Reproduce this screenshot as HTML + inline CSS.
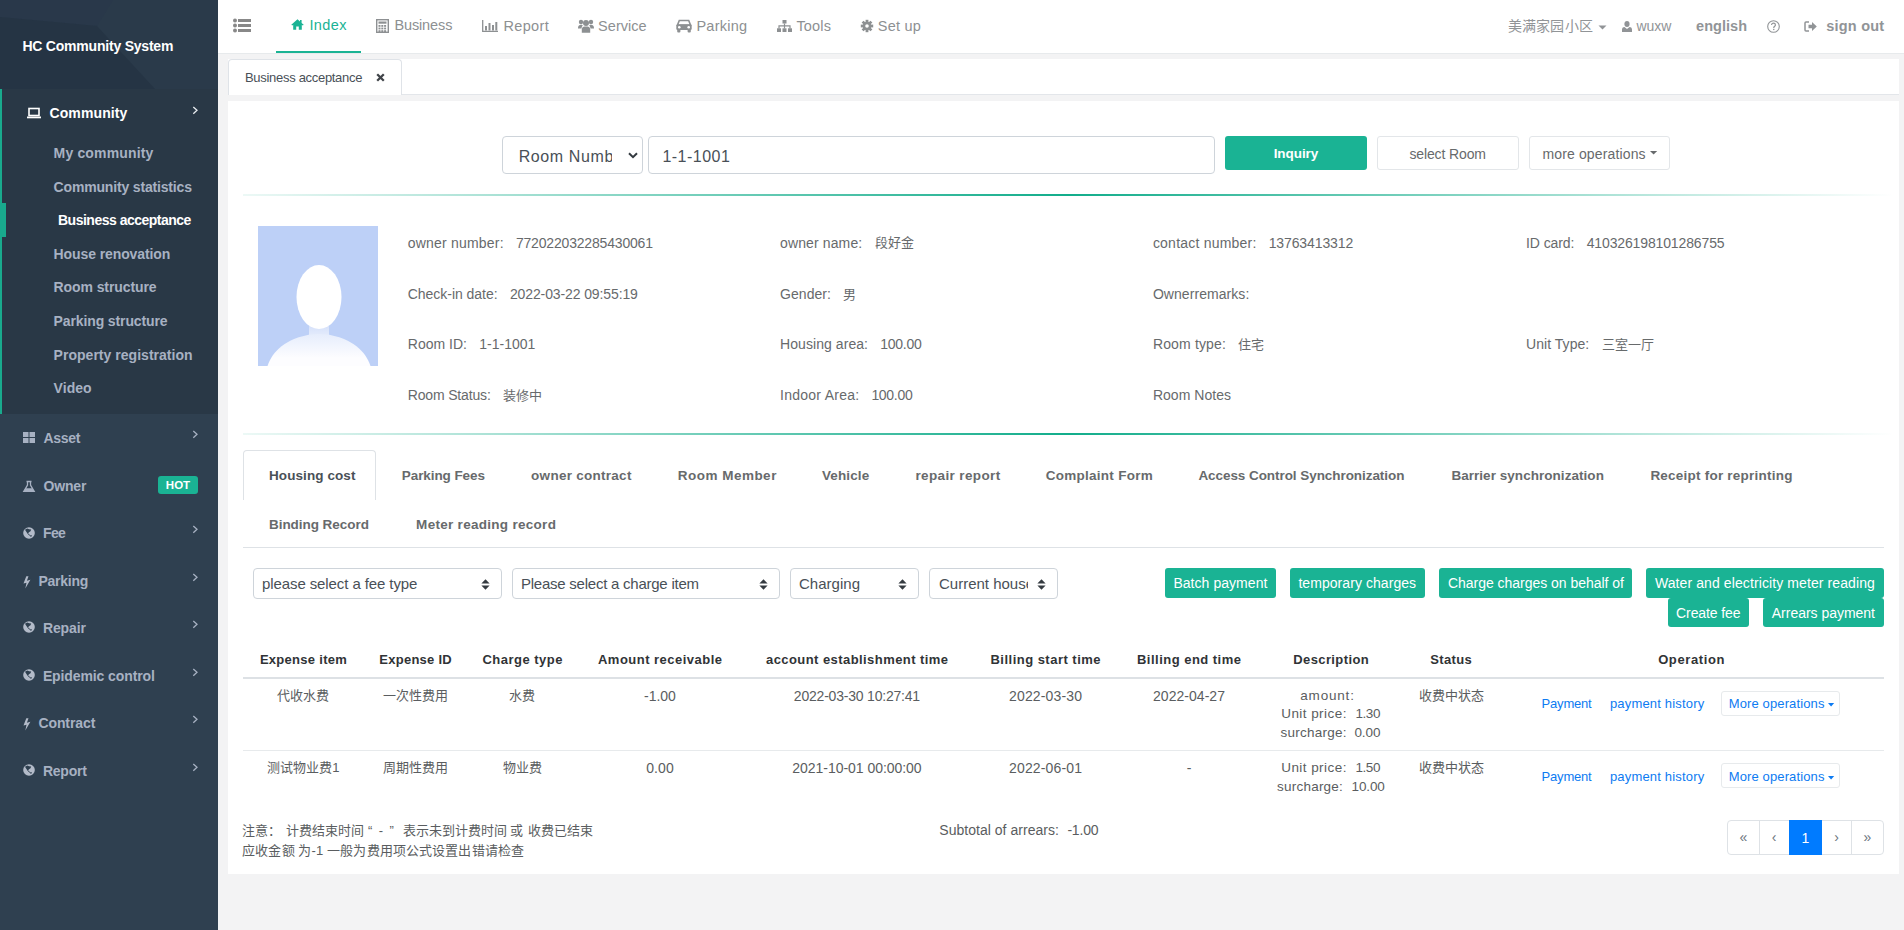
<!DOCTYPE html>
<html lang="zh-CN"><head><meta charset="utf-8"><title>HC Community System</title>
<style>
*{box-sizing:border-box}
html,body{margin:0;padding:0}
body{width:1904px;height:930px;overflow:hidden;background:#f3f3f4;font-family:"Liberation Sans",sans-serif;color:#676a6c;position:relative}
.t{position:absolute;white-space:nowrap}
svg{position:absolute;overflow:visible}
</style></head><body>
<div style="position:absolute;left:0px;top:0px;width:218px;height:930px;background:#2f4050"></div><svg style="left:0;top:0" width="218" height="89" viewBox="0 0 218 89"><rect width="218" height="89" fill="#2a3a4a"/><path d="M0 0 H113 L97 26 L0 17 Z" fill="#29384a"/><path d="M0 17 L97 26 L155 89 H0 Z" fill="#253444"/></svg><div class="t" style="left:22.40px;top:39.15px;font-size:14px;line-height:14px;color:#ffffff;font-weight:700;letter-spacing:-0.212px">HC Community System</div><div style="position:absolute;left:0px;top:89px;width:218px;height:325px;background:#293846"></div><div style="position:absolute;left:0px;top:89px;width:2px;height:325px;background:#19aa8d"></div><div style="position:absolute;left:0px;top:203px;width:6px;height:34px;background:#19aa8d"></div><svg style="left:27px;top:107px" width="14" height="12" viewBox="0 0 14 12"><rect x="2" y="1.5" width="10" height="7" fill="none" stroke="#fff" stroke-width="1.6"/><rect x="0" y="9.5" width="14" height="1.8" fill="#fff"/></svg><div class="t" style="left:49.40px;top:105.75px;font-size:14px;line-height:14px;color:#ffffff;font-weight:700;letter-spacing:0.125px">Community</div><svg style="left:192px;top:106px" width="7" height="9" viewBox="0 0 7 9"><path d="M1.3 0.9 L5 4.3 L1.3 7.7" fill="none" stroke="#e8ecf0" stroke-width="1.3"/></svg><div class="t" style="left:53.60px;top:146.25px;font-size:14px;line-height:14px;color:#a7b1c2;font-weight:700;letter-spacing:0.153px">My community</div><div class="t" style="left:53.60px;top:179.85px;font-size:14px;line-height:14px;color:#a7b1c2;font-weight:700;letter-spacing:-0.168px">Community statistics</div><div class="t" style="left:58.00px;top:213.05px;font-size:14px;line-height:14px;color:#ffffff;font-weight:700;letter-spacing:-0.500px">Business acceptance</div><div class="t" style="left:53.60px;top:246.85px;font-size:14px;line-height:14px;color:#a7b1c2;font-weight:700;letter-spacing:-0.103px">House renovation</div><div class="t" style="left:53.60px;top:280.45px;font-size:14px;line-height:14px;color:#a7b1c2;font-weight:700;letter-spacing:-0.095px">Room structure</div><div class="t" style="left:53.60px;top:314.05px;font-size:14px;line-height:14px;color:#a7b1c2;font-weight:700;letter-spacing:-0.121px">Parking structure</div><div class="t" style="left:53.60px;top:347.65px;font-size:14px;line-height:14px;color:#a7b1c2;font-weight:700;letter-spacing:0.026px">Property registration</div><div class="t" style="left:53.60px;top:381.25px;font-size:14px;line-height:14px;color:#a7b1c2;font-weight:700;letter-spacing:0.031px">Video</div><div class="t" style="left:43.40px;top:431.35px;font-size:14px;line-height:14px;color:#a7b1c2;font-weight:700;letter-spacing:-0.285px">Asset</div><svg style="left:23px;top:432.2px" width="12" height="11" viewBox="0 0 12 11"><rect x="0" y="0" width="5.5" height="5" fill="#a7b1c2"/><rect x="6.5" y="0" width="5.5" height="5" fill="#a7b1c2"/><rect x="0" y="6" width="5.5" height="5" fill="#a7b1c2"/><rect x="6.5" y="6" width="5.5" height="5" fill="#a7b1c2"/></svg><svg style="left:192px;top:430.2px" width="7" height="9" viewBox="0 0 7 9"><path d="M1.3 0.9 L5 4.3 L1.3 7.7" fill="none" stroke="#a7b1c2" stroke-width="1.3"/></svg><div class="t" style="left:43.40px;top:479.35px;font-size:14px;line-height:14px;color:#a7b1c2;font-weight:700;letter-spacing:-0.145px">Owner</div><svg style="left:23px;top:481.2px" width="12" height="11" viewBox="0 0 12 11"><path d="M3.5 0.5 H8.5 M4.5 0.5 V4 L0.8 10.3 H11.2 L7.5 4 V0.5" fill="none" stroke="#a7b1c2" stroke-width="1.3"/><path d="M2.6 7.3 H9.4 L11 10.3 H1 Z" fill="#a7b1c2"/></svg><div style="position:absolute;left:158px;top:476px;width:40px;height:18px;background:#1ab394;border-radius:3px"></div><div class="t" style="left:165.86px;top:480.27px;font-size:11.5px;line-height:11.5px;color:#ffffff;font-weight:700">HOT</div><div class="t" style="left:42.90px;top:526.35px;font-size:14px;line-height:14px;color:#a7b1c2;font-weight:700;letter-spacing:-0.562px">Fee</div><svg style="left:23px;top:526.6px" width="12" height="12" viewBox="0 0 12 12"><circle cx="6" cy="6" r="5.8" fill="#b3bbc9"/><path d="M2 2.7 L4.2 1.5 L6.2 2.2 L8.2 2.5 L7.5 4.3 L5.9 5.3 L4.9 6.9 L3.6 5.2 Z" fill="#2f4050"/><path d="M4.8 6.7 L7.4 8.8" stroke="#2f4050" stroke-width="0.9"/><path d="M7.2 8.3 L9 8.2 L8.3 9.8 L7.3 9.6 Z" fill="#2f4050"/></svg><svg style="left:192px;top:525.2px" width="7" height="9" viewBox="0 0 7 9"><path d="M1.3 0.9 L5 4.3 L1.3 7.7" fill="none" stroke="#a7b1c2" stroke-width="1.3"/></svg><div class="t" style="left:38.40px;top:574.15px;font-size:14px;line-height:14px;color:#a7b1c2;font-weight:700;letter-spacing:-0.227px">Parking</div><svg style="left:22.6px;top:575.5px" width="8" height="13" viewBox="0 0 8 13"><path d="M3.3 0.3 H5.5 L3.9 4.7 L7.4 3.8 L2.3 12.6 L3.5 6.7 L0.5 7.5 Z" fill="#b3bbc9"/></svg><svg style="left:192px;top:573px" width="7" height="9" viewBox="0 0 7 9"><path d="M1.3 0.9 L5 4.3 L1.3 7.7" fill="none" stroke="#a7b1c2" stroke-width="1.3"/></svg><div class="t" style="left:42.90px;top:621.15px;font-size:14px;line-height:14px;color:#a7b1c2;font-weight:700;letter-spacing:-0.116px">Repair</div><svg style="left:23px;top:621.4px" width="12" height="12" viewBox="0 0 12 12"><circle cx="6" cy="6" r="5.8" fill="#b3bbc9"/><path d="M2 2.7 L4.2 1.5 L6.2 2.2 L8.2 2.5 L7.5 4.3 L5.9 5.3 L4.9 6.9 L3.6 5.2 Z" fill="#2f4050"/><path d="M4.8 6.7 L7.4 8.8" stroke="#2f4050" stroke-width="0.9"/><path d="M7.2 8.3 L9 8.2 L8.3 9.8 L7.3 9.6 Z" fill="#2f4050"/></svg><svg style="left:192px;top:620px" width="7" height="9" viewBox="0 0 7 9"><path d="M1.3 0.9 L5 4.3 L1.3 7.7" fill="none" stroke="#a7b1c2" stroke-width="1.3"/></svg><div class="t" style="left:42.90px;top:668.75px;font-size:14px;line-height:14px;color:#a7b1c2;font-weight:700;letter-spacing:-0.105px">Epidemic control</div><svg style="left:23px;top:669.0px" width="12" height="12" viewBox="0 0 12 12"><circle cx="6" cy="6" r="5.8" fill="#b3bbc9"/><path d="M2 2.7 L4.2 1.5 L6.2 2.2 L8.2 2.5 L7.5 4.3 L5.9 5.3 L4.9 6.9 L3.6 5.2 Z" fill="#2f4050"/><path d="M4.8 6.7 L7.4 8.8" stroke="#2f4050" stroke-width="0.9"/><path d="M7.2 8.3 L9 8.2 L8.3 9.8 L7.3 9.6 Z" fill="#2f4050"/></svg><svg style="left:192px;top:667.6px" width="7" height="9" viewBox="0 0 7 9"><path d="M1.3 0.9 L5 4.3 L1.3 7.7" fill="none" stroke="#a7b1c2" stroke-width="1.3"/></svg><div class="t" style="left:38.40px;top:716.15px;font-size:14px;line-height:14px;color:#a7b1c2;font-weight:700;letter-spacing:-0.080px">Contract</div><svg style="left:22.6px;top:717.5px" width="8" height="13" viewBox="0 0 8 13"><path d="M3.3 0.3 H5.5 L3.9 4.7 L7.4 3.8 L2.3 12.6 L3.5 6.7 L0.5 7.5 Z" fill="#b3bbc9"/></svg><svg style="left:192px;top:715px" width="7" height="9" viewBox="0 0 7 9"><path d="M1.3 0.9 L5 4.3 L1.3 7.7" fill="none" stroke="#a7b1c2" stroke-width="1.3"/></svg><div class="t" style="left:42.90px;top:764.15px;font-size:14px;line-height:14px;color:#a7b1c2;font-weight:700;letter-spacing:-0.225px">Report</div><svg style="left:23px;top:764.4px" width="12" height="12" viewBox="0 0 12 12"><circle cx="6" cy="6" r="5.8" fill="#b3bbc9"/><path d="M2 2.7 L4.2 1.5 L6.2 2.2 L8.2 2.5 L7.5 4.3 L5.9 5.3 L4.9 6.9 L3.6 5.2 Z" fill="#2f4050"/><path d="M4.8 6.7 L7.4 8.8" stroke="#2f4050" stroke-width="0.9"/><path d="M7.2 8.3 L9 8.2 L8.3 9.8 L7.3 9.6 Z" fill="#2f4050"/></svg><svg style="left:192px;top:763px" width="7" height="9" viewBox="0 0 7 9"><path d="M1.3 0.9 L5 4.3 L1.3 7.7" fill="none" stroke="#a7b1c2" stroke-width="1.3"/></svg><div style="position:absolute;left:218px;top:0px;width:1686px;height:53px;background:#ffffff"></div><div style="position:absolute;left:218px;top:53px;width:1686px;height:1px;background:#e7eaec"></div><svg style="left:232px;top:18px" width="20" height="15" viewBox="0 0 20 15"><circle cx="3" cy="2.5" r="2" fill="#888"/><circle cx="3" cy="7.5" r="2" fill="#888"/><circle cx="3" cy="12.5" r="2" fill="#888"/><rect x="6" y="1" width="13" height="3" fill="#888"/><rect x="6" y="6" width="13" height="3" fill="#888"/><rect x="6" y="11" width="13" height="3" fill="#888"/></svg><div style="position:absolute;left:276px;top:51px;width:85px;height:2px;background:#1ab394"></div><svg style="left:291px;top:19px" width="13" height="11" viewBox="0 0 13 11"><path d="M6.5 0.3 L0.3 5.8 L1.2 6.6 L2.2 5.8 V10.8 H5.2 V7.6 H7.8 V10.8 H10.8 V5.8 L11.8 6.6 L12.7 5.8 L10.6 3.9 V1 H9 V2.5 Z" fill="#1ab394"/></svg><div class="t" style="left:309.40px;top:17.53px;font-size:14.5px;line-height:14.5px;color:#1ab394;letter-spacing:0.379px">Index</div><svg style="left:376px;top:19px" width="13" height="14" viewBox="0 0 13 14"><rect x="0.7" y="0.7" width="11.6" height="12.6" fill="none" stroke="#8d9092" stroke-width="1.4"/><rect x="2.5" y="2.5" width="8" height="2.2" fill="#8d9092"/><rect x="2.5" y="6.0" width="2" height="1.8" fill="#8d9092"/><rect x="2.5" y="8.6" width="2" height="1.8" fill="#8d9092"/><rect x="2.5" y="11.2" width="2" height="1.8" fill="#8d9092"/><rect x="5.3" y="6.0" width="2" height="1.8" fill="#8d9092"/><rect x="5.3" y="8.6" width="2" height="1.8" fill="#8d9092"/><rect x="5.3" y="11.2" width="2" height="1.8" fill="#8d9092"/><rect x="8.1" y="6.0" width="2" height="1.8" fill="#8d9092"/><rect x="8.1" y="8.6" width="2" height="1.8" fill="#8d9092"/><rect x="8.1" y="11.2" width="2" height="1.8" fill="#8d9092"/></svg><div class="t" style="left:394.40px;top:18.33px;font-size:14.5px;line-height:14.5px;color:#8d9092;letter-spacing:-0.121px">Business</div><svg style="left:482px;top:20px" width="16" height="12" viewBox="0 0 16 12"><path d="M0.7 0 V11.3 H16" fill="none" stroke="#8d9092" stroke-width="1.3"/><rect x="3" y="6" width="2" height="4.5" fill="#8d9092"/><rect x="6.5" y="3" width="2" height="7.5" fill="#8d9092"/><rect x="10" y="5" width="2" height="5.5" fill="#8d9092"/><rect x="13.3" y="2" width="2" height="8.5" fill="#8d9092"/></svg><div class="t" style="left:503.40px;top:18.53px;font-size:14.5px;line-height:14.5px;color:#8d9092;letter-spacing:0.374px">Report</div><svg style="left:578px;top:19px" width="16" height="14" viewBox="0 0 16 14"><circle cx="3" cy="3" r="2.2" fill="#8d9092"/><circle cx="13" cy="3" r="2.2" fill="#8d9092"/><circle cx="8" cy="4" r="3" fill="#8d9092"/><path d="M0 9 C0 6.5 1.5 5.8 3 5.8 C4 5.8 4.5 6.2 4.8 6.6 C3.8 7.5 3.6 8.4 3.6 9.6 H0 Z" fill="#8d9092"/><path d="M16 9 C16 6.5 14.5 5.8 13 5.8 C12 5.8 11.5 6.2 11.2 6.6 C12.2 7.5 12.4 8.4 12.4 9.6 H16 Z" fill="#8d9092"/><path d="M3.8 13.8 V10.5 C3.8 8.5 5.2 7.4 6.5 7.4 H9.5 C10.8 7.4 12.2 8.5 12.2 10.5 V13.8 Z" fill="#8d9092"/></svg><div class="t" style="left:598.10px;top:18.53px;font-size:14.5px;line-height:14.5px;color:#8d9092;letter-spacing:0.040px">Service</div><svg style="left:676px;top:19px" width="16" height="14" viewBox="0 0 16 14"><path d="M3.3 1.5 H12.7 L14.5 6 H1.5 Z" fill="none" stroke="#8d9092" stroke-width="1.6"/><rect x="0.3" y="5.6" width="15.4" height="5.4" rx="1.2" fill="#8d9092"/><rect x="1.2" y="10" width="3.2" height="3.6" rx="1" fill="#8d9092"/><rect x="11.6" y="10" width="3.2" height="3.6" rx="1" fill="#8d9092"/><circle cx="3.3" cy="8.2" r="1.3" fill="#fff"/><circle cx="12.7" cy="8.2" r="1.3" fill="#fff"/></svg><div class="t" style="left:696.40px;top:18.53px;font-size:14.5px;line-height:14.5px;color:#8d9092;letter-spacing:0.255px">Parking</div><svg style="left:777px;top:20px" width="15" height="12" viewBox="0 0 15 12"><rect x="5.5" y="0" width="4" height="3.5" fill="#8d9092"/><path d="M7.5 3.5 V5.8 M2 8.5 V5.8 H13 V8.5 M7.5 5.8 V8.5" fill="none" stroke="#8d9092" stroke-width="1.2"/><rect x="0" y="8.3" width="4" height="3.7" fill="#8d9092"/><rect x="5.5" y="8.3" width="4" height="3.7" fill="#8d9092"/><rect x="11" y="8.3" width="4" height="3.7" fill="#8d9092"/></svg><div class="t" style="left:796.40px;top:18.53px;font-size:14.5px;line-height:14.5px;color:#8d9092;letter-spacing:0.160px">Tools</div><svg style="left:861px;top:20px" width="12" height="12" viewBox="0 0 12 12"><g fill="#8d9092"><rect x="4.6" y="-0.2" width="2.8" height="12.4" transform="rotate(0 6 6)"/><rect x="4.6" y="-0.2" width="2.8" height="12.4" transform="rotate(45 6 6)"/><rect x="4.6" y="-0.2" width="2.8" height="12.4" transform="rotate(90 6 6)"/><rect x="4.6" y="-0.2" width="2.8" height="12.4" transform="rotate(135 6 6)"/><circle cx="6" cy="6" r="4.3"/></g><circle cx="6" cy="6" r="1.8" fill="#fff"/></svg><div class="t" style="left:877.80px;top:18.53px;font-size:14.5px;line-height:14.5px;color:#8d9092;letter-spacing:0.216px">Set up</div><div class="t" style="left:1507.90px;top:19.35px;font-size:14px;line-height:14px;color:#919497;letter-spacing:0.200px">美满家园小区</div><svg style="left:1598px;top:25px" width="9" height="5" viewBox="0 0 9 5"><path d="M0.5 0.5 H8.5 L4.5 4.5 Z" fill="#919497"/></svg><svg style="left:1622px;top:21px" width="10" height="11" viewBox="0 0 10 11"><ellipse cx="5" cy="3" rx="2.6" ry="3" fill="#919497"/><path d="M0 11 V8.6 C0 6.8 1.3 6 2.4 6 L5 8 L7.6 6 C8.7 6 10 6.8 10 8.6 V11 Z" fill="#919497"/></svg><div class="t" style="left:1636.40px;top:19.35px;font-size:14px;line-height:14px;color:#919497;letter-spacing:-0.005px">wuxw</div><div class="t" style="left:1696.10px;top:18.93px;font-size:14.5px;line-height:14.5px;color:#919497;font-weight:700;letter-spacing:0.039px">english</div><svg style="left:1767px;top:20px" width="13" height="13" viewBox="0 0 13 13"><circle cx="6.5" cy="6.5" r="5.8" fill="none" stroke="#919497" stroke-width="1.1"/><path d="M4.6 5 C4.6 3.8 5.4 3.2 6.5 3.2 C7.6 3.2 8.4 3.9 8.4 4.9 C8.4 6.1 7 6.2 6.8 7.4 V7.9" fill="none" stroke="#919497" stroke-width="1.2"/><rect x="6.1" y="8.8" width="1.3" height="1.3" fill="#919497"/></svg><svg style="left:1804px;top:21px" width="13" height="11" viewBox="0 0 13 11"><path d="M5 1 H2 C1.4 1 1 1.4 1 2 V9 C1 9.6 1.4 10 2 10 H5" fill="none" stroke="#919497" stroke-width="1.5"/><path d="M4.5 3.8 H8 V1 L12.8 5.5 L8 10 V7.2 H4.5 Z" fill="#919497"/></svg><div class="t" style="left:1826.20px;top:18.93px;font-size:14.5px;line-height:14.5px;color:#919497;font-weight:700;letter-spacing:0.230px">sign out</div><div style="position:absolute;left:228px;top:59px;width:1671px;height:35px;background:#ffffff"></div><div style="position:absolute;left:228px;top:94px;width:1671px;height:1px;background:#e3e6ea"></div><div style="position:absolute;left:228px;top:59px;width:174px;height:36px;border:1px solid #dfe3e8;border-bottom:none;border-radius:4px 4px 0 0;background:#fff"></div><div class="t" style="left:245.00px;top:71.00px;font-size:13px;line-height:13px;color:#495057;letter-spacing:-0.303px">Business acceptance</div><svg style="left:376px;top:73px" width="9" height="9" viewBox="0 0 9 9"><path d="M1.2 1.2 L7.8 7.8 M7.8 1.2 L1.2 7.8" stroke="#404449" stroke-width="2.3"/></svg><div style="position:absolute;left:228px;top:101px;width:1671px;height:773px;background:#ffffff"></div><div style="position:absolute;left:502px;top:136px;width:141px;height:38px;border:1px solid #ced4da;border-radius:4px;background:#fff"></div><div style="position:absolute;left:503px;top:137px;width:109px;height:36px;overflow:hidden"><div class="t" style="left:15.70px;top:11.76px;font-size:16px;line-height:16px;color:#495057;letter-spacing:0.600px">Room Number</div></div><svg style="left:628px;top:151.5px" width="10" height="7" viewBox="0 0 10 7"><path d="M1 1.2 L5 5.2 L9 1.2" fill="none" stroke="#343a40" stroke-width="2"/></svg><div style="position:absolute;left:648px;top:136px;width:567px;height:38px;border:1px solid #ced4da;border-radius:4px;background:#fff"></div><div class="t" style="left:662.40px;top:148.76px;font-size:16px;line-height:16px;color:#495057;letter-spacing:0.479px">1-1-1001</div><div style="position:absolute;left:1225px;top:136px;width:142px;height:34px;background:#1ab394;border-radius:3px"></div><div class="t" style="left:1273.70px;top:146.87px;font-size:13.5px;line-height:13.5px;color:#ffffff;font-weight:700;letter-spacing:-0.069px">Inquiry</div><div style="position:absolute;left:1377px;top:136px;width:142px;height:34px;border:1px solid #e3e6e9;border-radius:3px;background:#fff"></div><div class="t" style="left:1409.40px;top:146.65px;font-size:14px;line-height:14px;color:#676a6c;letter-spacing:-0.121px">select Room</div><div style="position:absolute;left:1529px;top:136px;width:141px;height:34px;border:1px solid #e3e6e9;border-radius:3px;background:#fff"></div><div class="t" style="left:1542.40px;top:146.65px;font-size:14px;line-height:14px;color:#676a6c;letter-spacing:0.145px">more operations</div><svg style="left:1649.5px;top:150.8px" width="8" height="4" viewBox="0 0 8 4"><path d="M0 0 H7.2 L3.6 3.6 Z" fill="#676a6c"/></svg><div style="position:absolute;left:243px;top:194px;width:1651px;height:2px;background:linear-gradient(to right, rgba(18,173,139,0.08) 0%, #12ad8b 50%, rgba(18,173,139,0.0) 100%)"></div><svg style="left:258px;top:226px" width="120" height="140" viewBox="0 0 120 140"><defs><linearGradient id="sh" gradientUnits="userSpaceOnUse" x1="0" y1="108" x2="0" y2="132"><stop offset="0" stop-color="#e6edfc"/><stop offset="1" stop-color="#fdfdff"/></linearGradient><linearGradient id="nk" x1="0" y1="0" x2="0" y2="1"><stop offset="0" stop-color="#d6e1fa"/><stop offset="1" stop-color="#eaf0fc"/></linearGradient></defs><rect width="120" height="140" fill="#bdd0f7"/><rect x="51" y="100" width="20" height="14" fill="url(#nk)"/><clipPath id="av"><rect width="120" height="140"/></clipPath><ellipse cx="61" cy="150" rx="53" ry="42" fill="url(#sh)" clip-path="url(#av)"/><ellipse cx="61" cy="71" rx="22.5" ry="32" fill="#ffffff"/></svg><div class="t" style="left:407.80px;top:235.55px;font-size:14px;line-height:14px;color:#676a6c;letter-spacing:0.201px">owner number:</div><div class="t" style="left:515.90px;top:235.55px;font-size:14px;line-height:14px;color:#676a6c;letter-spacing:-0.180px">772022032285430061</div><div class="t" style="left:407.80px;top:286.85px;font-size:14px;line-height:14px;color:#676a6c;letter-spacing:-0.037px">Check-in date:</div><div class="t" style="left:509.90px;top:286.85px;font-size:14px;line-height:14px;color:#676a6c;letter-spacing:-0.111px">2022-03-22 09:55:19</div><div class="t" style="left:407.80px;top:336.85px;font-size:14px;line-height:14px;color:#676a6c;letter-spacing:0.011px">Room ID:</div><div class="t" style="left:479.30px;top:336.85px;font-size:14px;line-height:14px;color:#676a6c;letter-spacing:0.008px">1-1-1001</div><div class="t" style="left:407.80px;top:387.85px;font-size:14px;line-height:14px;color:#676a6c;letter-spacing:-0.166px">Room Status:</div><div class="t" style="left:503.10px;top:388.70px;font-size:13px;line-height:13px;color:#676a6c;letter-spacing:0.100px">装修中</div><div class="t" style="left:780.10px;top:235.55px;font-size:14px;line-height:14px;color:#676a6c;letter-spacing:0.116px">owner name:</div><div class="t" style="left:874.50px;top:236.40px;font-size:13px;line-height:13px;color:#676a6c;letter-spacing:0.350px">段好金</div><div class="t" style="left:780.10px;top:286.85px;font-size:14px;line-height:14px;color:#676a6c;letter-spacing:0.034px">Gender:</div><div class="t" style="left:843.20px;top:287.70px;font-size:13px;line-height:13px;color:#676a6c">男</div><div class="t" style="left:780.10px;top:336.85px;font-size:14px;line-height:14px;color:#676a6c;letter-spacing:0.061px">Housing area:</div><div class="t" style="left:880.30px;top:336.85px;font-size:14px;line-height:14px;color:#676a6c;letter-spacing:-0.266px">100.00</div><div class="t" style="left:780.10px;top:387.85px;font-size:14px;line-height:14px;color:#676a6c;letter-spacing:0.247px">Indoor Area:</div><div class="t" style="left:871.40px;top:387.85px;font-size:14px;line-height:14px;color:#676a6c;letter-spacing:-0.306px">100.00</div><div class="t" style="left:1152.90px;top:235.55px;font-size:14px;line-height:14px;color:#676a6c;letter-spacing:0.222px">contact number:</div><div class="t" style="left:1268.70px;top:235.55px;font-size:14px;line-height:14px;color:#676a6c;letter-spacing:-0.116px">13763413312</div><div class="t" style="left:1152.90px;top:336.85px;font-size:14px;line-height:14px;color:#676a6c;letter-spacing:0.156px">Room type:</div><div class="t" style="left:1238.20px;top:337.70px;font-size:13px;line-height:13px;color:#676a6c;letter-spacing:0.200px">住宅</div><div class="t" style="left:1526.00px;top:235.55px;font-size:14px;line-height:14px;color:#676a6c;letter-spacing:-0.088px">ID card:</div><div class="t" style="left:1586.70px;top:235.55px;font-size:14px;line-height:14px;color:#676a6c;letter-spacing:-0.133px">410326198101286755</div><div class="t" style="left:1526.00px;top:336.85px;font-size:14px;line-height:14px;color:#676a6c;letter-spacing:0.047px">Unit Type:</div><div class="t" style="left:1601.50px;top:337.70px;font-size:13px;line-height:13px;color:#676a6c;letter-spacing:0.300px">三室一厅</div><div class="t" style="left:1152.90px;top:286.85px;font-size:14px;line-height:14px;color:#676a6c;letter-spacing:0.059px">Ownerremarks:</div><div class="t" style="left:1152.90px;top:387.85px;font-size:14px;line-height:14px;color:#676a6c;letter-spacing:0.032px">Room Notes</div><div style="position:absolute;left:243px;top:433px;width:1651px;height:2px;background:linear-gradient(to right, rgba(18,173,139,0.08) 0%, #12ad8b 50%, rgba(18,173,139,0.0) 100%)"></div><div style="position:absolute;left:243px;top:450px;width:133px;height:50px;border:1px solid #dee2e6;border-bottom:none;border-radius:4px 4px 0 0;background:#fff"></div><div style="position:absolute;left:243px;top:547px;width:1641px;height:1px;background:#dee2e6"></div><div class="t" style="left:269.00px;top:468.87px;font-size:13.5px;line-height:13.5px;color:#495057;font-weight:700;letter-spacing:0.080px">Housing cost</div><div class="t" style="left:401.80px;top:468.87px;font-size:13.5px;line-height:13.5px;color:#676a6c;font-weight:700;letter-spacing:-0.086px">Parking Fees</div><div class="t" style="left:531.10px;top:468.87px;font-size:13.5px;line-height:13.5px;color:#676a6c;font-weight:700;letter-spacing:0.271px">owner contract</div><div class="t" style="left:677.70px;top:468.87px;font-size:13.5px;line-height:13.5px;color:#676a6c;font-weight:700;letter-spacing:0.493px">Room Member</div><div class="t" style="left:822.00px;top:468.87px;font-size:13.5px;line-height:13.5px;color:#676a6c;font-weight:700;letter-spacing:0.109px">Vehicle</div><div class="t" style="left:915.40px;top:468.87px;font-size:13.5px;line-height:13.5px;color:#676a6c;font-weight:700;letter-spacing:0.377px">repair report</div><div class="t" style="left:1045.70px;top:468.87px;font-size:13.5px;line-height:13.5px;color:#676a6c;font-weight:700;letter-spacing:0.269px">Complaint Form</div><div class="t" style="left:1198.40px;top:468.87px;font-size:13.5px;line-height:13.5px;color:#676a6c;font-weight:700;letter-spacing:-0.062px">Access Control Synchronization</div><div class="t" style="left:1451.40px;top:468.87px;font-size:13.5px;line-height:13.5px;color:#676a6c;font-weight:700;letter-spacing:0.043px">Barrier synchronization</div><div class="t" style="left:1650.40px;top:468.87px;font-size:13.5px;line-height:13.5px;color:#676a6c;font-weight:700;letter-spacing:0.225px">Receipt for reprinting</div><div class="t" style="left:269.00px;top:517.77px;font-size:13.5px;line-height:13.5px;color:#676a6c;font-weight:700;letter-spacing:-0.046px">Binding Record</div><div class="t" style="left:416.10px;top:517.77px;font-size:13.5px;line-height:13.5px;color:#676a6c;font-weight:700;letter-spacing:0.290px">Meter reading record</div><div style="position:absolute;left:253px;top:568px;width:249px;height:31px;border:1px solid #ced4da;border-radius:4px;background:#fff"></div><div class="t" style="left:262.00px;top:576.00px;font-size:15px;line-height:15px;color:#495057;letter-spacing:-0.096px">please select a fee type</div><svg style="left:480.5px;top:578.5px" width="9" height="11" viewBox="0 0 9 11"><path d="M4.5 0.3 L8.6 4.6 H0.4 Z M4.5 10.7 L8.6 6.4 H0.4 Z" fill="#343a40"/></svg><div style="position:absolute;left:512px;top:568px;width:268px;height:31px;border:1px solid #ced4da;border-radius:4px;background:#fff"></div><div class="t" style="left:521.00px;top:576.00px;font-size:15px;line-height:15px;color:#495057;letter-spacing:-0.241px">Please select a charge item</div><svg style="left:758.5px;top:578.5px" width="9" height="11" viewBox="0 0 9 11"><path d="M4.5 0.3 L8.6 4.6 H0.4 Z M4.5 10.7 L8.6 6.4 H0.4 Z" fill="#343a40"/></svg><div style="position:absolute;left:790px;top:568px;width:129px;height:31px;border:1px solid #ced4da;border-radius:4px;background:#fff"></div><div class="t" style="left:799.00px;top:576.00px;font-size:15px;line-height:15px;color:#495057;letter-spacing:0.018px">Charging</div><svg style="left:897.5px;top:578.5px" width="9" height="11" viewBox="0 0 9 11"><path d="M4.5 0.3 L8.6 4.6 H0.4 Z M4.5 10.7 L8.6 6.4 H0.4 Z" fill="#343a40"/></svg><div style="position:absolute;left:929px;top:568px;width:129px;height:31px;border:1px solid #ced4da;border-radius:4px;background:#fff"></div><div style="position:absolute;left:930px;top:569px;width:98px;height:29px;overflow:hidden"><div class="t" style="left:9.00px;top:7.00px;font-size:15px;line-height:15px;color:#495057">Current house</div></div><svg style="left:1036.5px;top:578.5px" width="9" height="11" viewBox="0 0 9 11"><path d="M4.5 0.3 L8.6 4.6 H0.4 Z M4.5 10.7 L8.6 6.4 H0.4 Z" fill="#343a40"/></svg><div style="position:absolute;left:1165px;top:568px;width:111px;height:30px;background:#1ab394;border-radius:3px"></div><div class="t" style="left:1173.40px;top:576.35px;font-size:14px;line-height:14px;color:#ffffff;letter-spacing:0.051px">Batch payment</div><div style="position:absolute;left:1290px;top:568px;width:135px;height:30px;background:#1ab394;border-radius:3px"></div><div class="t" style="left:1298.40px;top:576.35px;font-size:14px;line-height:14px;color:#ffffff;letter-spacing:0.061px">temporary charges</div><div style="position:absolute;left:1439px;top:568px;width:193px;height:30px;background:#1ab394;border-radius:3px"></div><div class="t" style="left:1447.90px;top:576.35px;font-size:14px;line-height:14px;color:#ffffff;letter-spacing:-0.026px">Charge charges on behalf of</div><div style="position:absolute;left:1646px;top:568px;width:238px;height:30px;background:#1ab394;border-radius:3px"></div><div class="t" style="left:1654.90px;top:576.35px;font-size:14px;line-height:14px;color:#ffffff;letter-spacing:0.101px">Water and electricity meter reading</div><div style="position:absolute;left:1668px;top:598px;width:81px;height:29px;background:#1ab394;border-radius:3px"></div><div class="t" style="left:1676.10px;top:605.95px;font-size:14px;line-height:14px;color:#ffffff;letter-spacing:-0.108px">Create fee</div><div style="position:absolute;left:1763px;top:598px;width:121px;height:29px;background:#1ab394;border-radius:3px"></div><div class="t" style="left:1771.80px;top:605.95px;font-size:14px;line-height:14px;color:#ffffff;letter-spacing:-0.020px">Arrears payment</div><div style="position:absolute;left:243px;top:677px;width:1641px;height:2px;background:#dde1e5"></div><div style="position:absolute;left:243px;top:750px;width:1641px;height:1px;background:#e7eaec"></div><div class="t" style="left:259.90px;top:653.10px;font-size:13px;line-height:13px;color:#303336;font-weight:700;letter-spacing:0.288px">Expense item</div><div class="t" style="left:379.35px;top:653.10px;font-size:13px;line-height:13px;color:#303336;font-weight:700;letter-spacing:0.245px">Expense ID</div><div class="t" style="left:482.40px;top:653.10px;font-size:13px;line-height:13px;color:#303336;font-weight:700;letter-spacing:0.486px">Charge type</div><div class="t" style="left:598.00px;top:653.10px;font-size:13px;line-height:13px;color:#303336;font-weight:700;letter-spacing:0.479px">Amount receivable</div><div class="t" style="left:766.00px;top:653.10px;font-size:13px;line-height:13px;color:#303336;font-weight:700;letter-spacing:0.431px">account establishment time</div><div class="t" style="left:990.50px;top:653.10px;font-size:13px;line-height:13px;color:#303336;font-weight:700;letter-spacing:0.479px">Billing start time</div><div class="t" style="left:1137.00px;top:653.10px;font-size:13px;line-height:13px;color:#303336;font-weight:700;letter-spacing:0.480px">Billing end time</div><div class="t" style="left:1293.30px;top:653.10px;font-size:13px;line-height:13px;color:#303336;font-weight:700;letter-spacing:0.388px">Description</div><div class="t" style="left:1430.35px;top:653.10px;font-size:13px;line-height:13px;color:#303336;font-weight:700;letter-spacing:0.313px">Status</div><div class="t" style="left:1658.15px;top:653.10px;font-size:13px;line-height:13px;color:#303336;font-weight:700;letter-spacing:0.612px">Operation</div><div class="t" style="left:277.40px;top:688.70px;font-size:13px;line-height:13px;color:#5a5d60">代收水费</div><div class="t" style="left:383.00px;top:688.70px;font-size:13px;line-height:13px;color:#5a5d60">一次性费用</div><div class="t" style="left:509.40px;top:688.70px;font-size:13px;line-height:13px;color:#5a5d60">水费</div><div class="t" style="left:644.10px;top:688.95px;font-size:14px;line-height:14px;color:#5a5d60;letter-spacing:-0.030px">-1.00</div><div class="t" style="left:793.85px;top:688.95px;font-size:14px;line-height:14px;color:#5a5d60;letter-spacing:-0.206px">2022-03-30 10:27:41</div><div class="t" style="left:1009.05px;top:688.95px;font-size:14px;line-height:14px;color:#5a5d60;letter-spacing:0.142px">2022-03-30</div><div class="t" style="left:1153.05px;top:688.95px;font-size:14px;line-height:14px;color:#5a5d60;letter-spacing:0.031px">2022-04-27</div><div class="t" style="left:267.28px;top:760.70px;font-size:13px;line-height:13px;color:#5a5d60">测试物业费1</div><div class="t" style="left:383.00px;top:760.70px;font-size:13px;line-height:13px;color:#5a5d60">周期性费用</div><div class="t" style="left:502.90px;top:760.70px;font-size:13px;line-height:13px;color:#5a5d60">物业费</div><div class="t" style="left:646.25px;top:760.95px;font-size:14px;line-height:14px;color:#5a5d60;letter-spacing:0.083px">0.00</div><div class="t" style="left:792.35px;top:760.95px;font-size:14px;line-height:14px;color:#5a5d60;letter-spacing:-0.039px">2021-10-01 00:00:00</div><div class="t" style="left:1009.05px;top:760.95px;font-size:14px;line-height:14px;color:#5a5d60;letter-spacing:0.142px">2022-06-01</div><div class="t" style="left:1186.66px;top:760.95px;font-size:14px;line-height:14px;color:#5a5d60">-</div><div class="t" style="left:1300.30px;top:689.37px;font-size:13.5px;line-height:13.5px;color:#5a5d60;letter-spacing:0.803px">amount:</div><div class="t" style="left:1281.20px;top:707.17px;font-size:13.5px;line-height:13.5px;color:#5a5d60;letter-spacing:0.442px">Unit price:</div><div class="t" style="left:1355.40px;top:707.17px;font-size:13.5px;line-height:13.5px;color:#5a5d60;letter-spacing:-0.427px">1.30</div><div class="t" style="left:1280.50px;top:726.17px;font-size:13.5px;line-height:13.5px;color:#5a5d60;letter-spacing:0.234px">surcharge:</div><div class="t" style="left:1354.40px;top:726.17px;font-size:13.5px;line-height:13.5px;color:#5a5d60;letter-spacing:-0.094px">0.00</div><div class="t" style="left:1281.20px;top:760.77px;font-size:13.5px;line-height:13.5px;color:#5a5d60;letter-spacing:0.442px">Unit price:</div><div class="t" style="left:1355.40px;top:760.77px;font-size:13.5px;line-height:13.5px;color:#5a5d60;letter-spacing:-0.427px">1.50</div><div class="t" style="left:1277.10px;top:779.97px;font-size:13.5px;line-height:13.5px;color:#5a5d60;letter-spacing:0.211px">surcharge:</div><div class="t" style="left:1351.60px;top:779.97px;font-size:13.5px;line-height:13.5px;color:#5a5d60;letter-spacing:-0.149px">10.00</div><div class="t" style="left:1418.50px;top:688.70px;font-size:13px;line-height:13px;color:#5a5d60">收费中状态</div><div class="t" style="left:1418.50px;top:760.70px;font-size:13px;line-height:13px;color:#5a5d60">收费中状态</div><div class="t" style="left:1541.60px;top:696.80px;font-size:13px;line-height:13px;color:#0d7bf2;letter-spacing:-0.202px">Payment</div><div class="t" style="left:1609.90px;top:696.80px;font-size:13px;line-height:13px;color:#0d7bf2;letter-spacing:0.181px">payment history</div><div style="position:absolute;left:1721px;top:690.5px;width:119px;height:25px;border:1px solid #e7eaec;border-radius:3px;background:#fff"></div><div class="t" style="left:1728.80px;top:696.80px;font-size:13px;line-height:13px;color:#0d7bf2;letter-spacing:0.118px">More operations</div><svg style="left:1827.5px;top:702.5999999999999px" width="7" height="4" viewBox="0 0 7 4"><path d="M0 0 H6.2 L3.1 3.4 Z" fill="#0d7bf2"/></svg><div class="t" style="left:1541.60px;top:769.80px;font-size:13px;line-height:13px;color:#0d7bf2;letter-spacing:-0.202px">Payment</div><div class="t" style="left:1609.90px;top:769.80px;font-size:13px;line-height:13px;color:#0d7bf2;letter-spacing:0.181px">payment history</div><div style="position:absolute;left:1721px;top:762.5px;width:119px;height:25px;border:1px solid #e7eaec;border-radius:3px;background:#fff"></div><div class="t" style="left:1728.80px;top:769.80px;font-size:13px;line-height:13px;color:#0d7bf2;letter-spacing:0.118px">More operations</div><svg style="left:1827.5px;top:775.5999999999999px" width="7" height="4" viewBox="0 0 7 4"><path d="M0 0 H6.2 L3.1 3.4 Z" fill="#0d7bf2"/></svg><div class="t" style="left:242.20px;top:823.50px;font-size:13px;line-height:13px;color:#5a5d60">注意：</div><div class="t" style="left:285.90px;top:823.50px;font-size:13px;line-height:13px;color:#5a5d60">计费结束时间</div><div class="t" style="left:402.90px;top:823.50px;font-size:13px;line-height:13px;color:#5a5d60">表示未到计费时间</div><div class="t" style="left:510.40px;top:823.50px;font-size:13px;line-height:13px;color:#5a5d60">或</div><div class="t" style="left:527.90px;top:823.50px;font-size:13px;line-height:13px;color:#5a5d60">收费已结束</div><div class="t" style="left:367.90px;top:823.50px;font-size:13px;line-height:13px;color:#5a5d60;letter-spacing:6.500px">“-”</div><div class="t" style="left:242.20px;top:843.50px;font-size:13px;line-height:13px;color:#5a5d60;letter-spacing:0.131px">应收金额 为-1 一般为费用项公式设置出错请检查</div><div class="t" style="left:939.30px;top:822.95px;font-size:14px;line-height:14px;color:#5a5d60;letter-spacing:0.028px">Subtotal of arrears:</div><div class="t" style="left:1067.40px;top:822.95px;font-size:14px;line-height:14px;color:#5a5d60;letter-spacing:-0.180px">-1.00</div><div style="position:absolute;left:1727px;top:820px;width:157px;height:35px;border:1px solid #dee2e6;border-radius:4px;background:#fff"></div><div style="position:absolute;left:1759px;top:820px;width:1px;height:35px;background:#dee2e6"></div><div style="position:absolute;left:1851px;top:820px;width:1px;height:35px;background:#dee2e6"></div><div style="position:absolute;left:1789px;top:820px;width:33px;height:35px;background:#007bff"></div><div class="t" style="left:1801.60px;top:831.35px;font-size:14px;line-height:14px;color:#ffffff">1</div><div class="t" style="left:1739.60px;top:830.15px;font-size:14px;line-height:14px;color:#6c757d">«</div><div class="t" style="left:1771.66px;top:830.15px;font-size:14px;line-height:14px;color:#6c757d">‹</div><div class="t" style="left:1834.16px;top:830.15px;font-size:14px;line-height:14px;color:#6c757d">›</div><div class="t" style="left:1863.60px;top:830.15px;font-size:14px;line-height:14px;color:#6c757d">»</div></body></html>
